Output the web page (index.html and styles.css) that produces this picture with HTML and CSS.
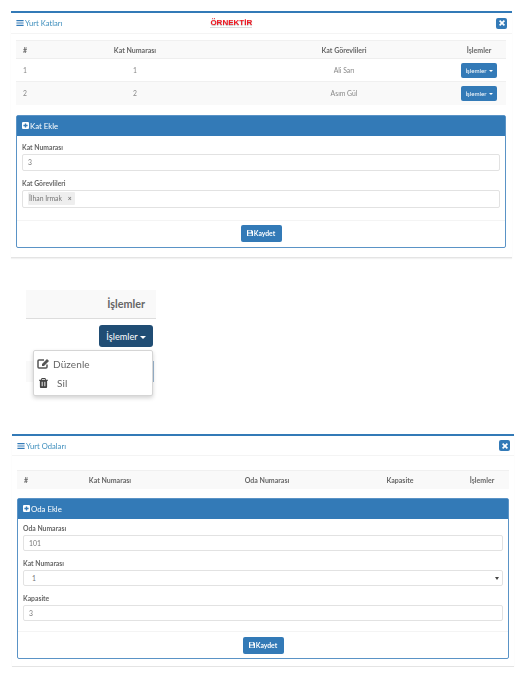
FILE: index.html
```html
<!DOCTYPE html>
<html lang="tr">
<head>
  <meta charset="UTF-8" />
  <title>Yurt Katları</title>
  <link rel="stylesheet" href="styles.css">
</head>
<body>
  <svg class="sprite" width="0" height="0">
    <symbol id="i-bars" viewBox="0 0 12 10"><path d="M0 0h12v2H0zM0 4h12v2H0zM0 8h12v2H0z"/></symbol>
    <symbol id="i-close" viewBox="0 0 10 10"><path d="M2 0l3 3 3-3 2 2-3 3 3 3-2 2-3-3-3 3-2-2 3-3-3-3z"/></symbol>
    <symbol id="i-plus" viewBox="0 0 10 10"><path fill-rule="evenodd" d="M1.5 0h7A1.5 1.5 0 0 1 10 1.500v7A1.500 1.500 0 0 1 8.500 10h-7A1.500 1.500 0 0 1 0 8.500v-7A1.500 1.500 0 0 1 1.500 0zM4 2v2H2v2h2v2h2V6h2V4H6V2z"/></symbol>
    <symbol id="i-save" viewBox="0 0 10 10"><path fill-rule="evenodd" d="M1 0h7l2 2v7a1 1 0 0 1-1 1H1a1 1 0 0 1-1-1V1a1 1 0 0 1 1-1zm1 1v3h5V1zm0 5v3h6V6z"/></symbol>
  </svg>

  <section class="box box-katlar">
    <header class="box-header">
      <svg class="ico-bars"><use href="#i-bars"/></svg>
      <span class="box-title">Yurt Katları</span>
      <span class="ornek">ÖRNEKTİR</span>
      <button class="btn-close"><svg><use href="#i-close"/></svg></button>
    </header>

    <table class="grid">
      <colgroup>
        <col class="k1"><col class="k2"><col class="k3"><col class="k4">
      </colgroup>
      <thead>
        <tr><th class="left">#</th><th>Kat Numarası</th><th>Kat Görevlileri</th><th>İşlemler</th></tr>
      </thead>
      <tbody>
        <tr>
          <td class="left">1</td><td>1</td><td>Ali Sarı</td>
          <td><button class="btn-mini">İşlemler<i class="caret"></i></button></td>
        </tr>
        <tr>
          <td class="left">2</td><td>2</td><td>Asım Gül</td>
          <td><button class="btn-mini">İşlemler<i class="caret"></i></button></td>
        </tr>
      </tbody>
    </table>

    <div class="panel">
      <div class="panel-heading"><svg class="ico-plus"><use href="#i-plus"/></svg>Kat Ekle</div>
      <div class="panel-body">
        <label>Kat Numarası</label>
        <input class="field" type="text" value="3">
        <label class="next">Kat Görevlileri</label>
        <div class="field tags"><span class="tag">İlhan Irmak <b>×</b></span></div>
      </div>
      <div class="panel-footer">
        <button class="btn-save"><svg><use href="#i-save"/></svg>Kaydet</button>
      </div>
    </div>
  </section>

  <div class="crop">
    <div class="crop-head">İşlemler</div>
    <div class="crop-row">
      <button class="btn-open">İşlemler<i class="caret"></i></button>
      <span class="crop-edge"></span>
      <ul class="menu">
        <li>
          <svg viewBox="0 0 13 11" width="13" height="11"><path fill="none" stroke="#555" stroke-width="1.500" d="M10 6.500V9a1 1 0 0 1-1 1H2a1 1 0 0 1-1-1V3a1 1 0 0 1 1-1h5"/><path fill="#555" d="M5 6l5-5 2 2-5 5H5z"/></svg>
          <span>Düzenle</span>
        </li>
        <li class="menu-sil">
          <svg viewBox="0 0 10 11" width="9" height="10"><path fill="#444" fill-rule="evenodd" d="M3 0h4l1 2h2v1H9v7a1 1 0 0 1-1 1H2a1 1 0 0 1-1-1V3H0V2h2zm.500 1L3 2h4l-.500-1zM3 4v5h1V4zm3 0v5h1V4z"/></svg>
          <span>Sil</span>
        </li>
      </ul>
    </div>
  </div>

  <section class="box box-odalar">
    <header class="box-header">
      <svg class="ico-bars"><use href="#i-bars"/></svg>
      <span class="box-title">Yurt Odaları</span>
      <button class="btn-close"><svg><use href="#i-close"/></svg></button>
    </header>

    <table class="grid">
      <colgroup>
        <col class="o1"><col class="o2"><col class="o3"><col class="o4"><col class="o5">
      </colgroup>
      <thead>
        <tr><th class="left">#</th><th>Kat Numarası</th><th>Oda Numarası</th><th>Kapasite</th><th>İşlemler</th></tr>
      </thead>
    </table>

    <div class="panel">
      <div class="panel-heading"><svg class="ico-plus"><use href="#i-plus"/></svg>Oda Ekle</div>
      <div class="panel-body">
        <label>Oda Numarası</label>
        <input class="field" type="text" value="101">
        <label class="next">Kat Numarası</label>
        <div class="field select">1<i class="select-arrow"></i></div>
        <label class="next">Kapasite</label>
        <input class="field" type="text" value="3">
      </div>
      <div class="panel-footer">
        <button class="btn-save"><svg><use href="#i-save"/></svg>Kaydet</button>
      </div>
    </div>
  </section>
</body>
</html>
```
FILE: styles.css
```css
* {
  box-sizing: border-box;
}

body {
  margin: 0;
  padding: 0;
  background: #fff;
  font-family: Lato, sans-serif;
  font-size: 6.800px;
  color: #777;
}

.sprite {
  position: absolute;
}

button {
  font-family: inherit;
  cursor: pointer;
}

/* outer boxes */
.box {
  background: #fff;
  border-top: 2px solid #337ab7;
  border-bottom: 1px solid #e4e4e4;
  box-shadow: 0 1px 1px rgba(0,0,0,0.05);
  filter: blur(0.3px);
}

.box-katlar {
  width: 501px;
  height: 247px;
  margin: 11px 0 0 11px;
}

.box-odalar {
  width: 502px;
  height: 233px;
  margin: 38px 0 0 12px;
}

.box-header {
  display: flex;
  align-items: center;
  height: 21px;
  padding: 0 5px;
  border-bottom: 1px solid #f4f4f4;
}

.box-odalar .box-header {
  height: 20px;
  padding-right: 4px;
}

.ico-bars {
  width: 8px;
  height: 6px;
  fill: #337ab7;
  margin-right: 1px;
}

.box-title {
  font-size: 7.600px;
  color: #3c8dbc;
}

.ornek {
  margin-left: 148px;
  font-family: "Liberation Sans", sans-serif;
  font-size: 8px;
  font-weight: bold;
  color: #f0141e;
  text-shadow: 0 1px 1px #bbb;
  border-bottom: 1px solid #ddd;
}

.btn-close {
  margin-left: auto;
  width: 11px;
  height: 11px;
  padding: 2.500px;
  border: none;
  border-radius: 2px;
  background: #337ab7;
  display: flex;
}

.btn-close svg {
  width: 6px;
  height: 6px;
  fill: #fff;
}

/* tables */
.grid {
  border-collapse: collapse;
  table-layout: fixed;
  margin: 6px 0 0 5px;
}

.box-katlar .grid {
  width: 490px;
}

.box-odalar .grid {
  width: 492px;
  margin-top: 14px;
}

.k1 { width: 18px; }
.k2 { width: 202px; }
.k3 { width: 216px; }
.k4 { width: 54px; }

.o1 { width: 14px; }
.o2 { width: 158px; }
.o3 { width: 156px; }
.o4 { width: 110px; }
.o5 { width: 54px; }

.grid th {
  height: 18px;
  padding: 0;
  background: #f9f9f9;
  font-size: 7px;
  font-weight: 700;
  color: #666;
  text-align: center;
}

.grid thead {
  border-top: 1px solid #f0f0f0;
  border-bottom: 1px solid #eee;
}

.box-odalar .grid thead {
  border-bottom: none;
}

.grid td {
  height: 23px;
  padding: 0;
  text-align: center;
  font-size: 6.800px;
  color: #888;
}

.grid tbody tr {
  border-bottom: 1px solid #f0f0f0;
}

.grid tbody tr:nth-child(even) {
  background: #f9f9f9;
  border-bottom: none;
}

.grid .left {
  text-align: left;
  padding-left: 7px;
}

.btn-mini {
  width: 36px;
  height: 15px;
  padding: 0;
  border: none;
  border-radius: 2px;
  background: #337ab7;
  color: #fff;
  font-size: 6.200px;
  vertical-align: middle;
}

.caret {
  display: inline-block;
  margin-left: 2px;
  vertical-align: middle;
  border-top: 2px solid #fff;
  border-left: 2px solid transparent;
  border-right: 2px solid transparent;
}

/* form panel */
.panel {
  margin: 10px 0 0 5px;
  border: 1px solid #5a93c6;
  border-radius: 2px;
  background: #fff;
}

.box-katlar .panel {
  width: 490px;
  height: 133px;
}

.box-odalar .panel {
  width: 492px;
  height: 161px;
  margin-top: 9px;
}

.panel-heading {
  display: flex;
  align-items: center;
  height: 20px;
  padding-left: 5px;
  background: #337ab7;
  color: #fff;
  font-size: 7.800px;
}

.ico-plus {
  width: 7px;
  height: 7px;
  fill: #fff;
  margin-right: 1px;
}

.panel-body {
  padding: 6px 5px 0;
  height: 85px;
  border-bottom: 1px solid #f4f4f4;
}

.box-odalar .panel-body {
  height: 113px;
  padding-top: 4px;
}

.panel-body label {
  display: block;
  height: 10px;
  line-height: 10px;
  margin-bottom: 2px;
  font-size: 6.800px;
  font-weight: 700;
  color: #666;
}

.panel-body .next {
  margin-top: 7px;
}

.field {
  display: block;
  width: 100%;
  height: 17px;
  padding: 0 5px;
  border: 1px solid #e2e2e2;
  border-radius: 2px;
  background: #fff;
  font-family: inherit;
  font-size: 6.800px;
  line-height: 15px;
  color: #777;
}

.box-odalar .field {
  height: 16px;
  line-height: 14px;
}

.tags {
  display: flex;
  align-items: center;
  padding-left: 5px;
  height: 18px;
}

.tag {
  padding: 0 3px 0 1px;
  background: #eee;
  border-radius: 1px;
  line-height: 13px;
  color: #777;
}

.tag b {
  margin-left: 4px;
}

.box-odalar .select {
  position: relative;
  padding-left: 8px;
}

.select-arrow {
  position: absolute;
  right: 3px;
  top: 6px;
  border-top: 3px solid #444;
  border-left: 2px solid transparent;
  border-right: 2px solid transparent;
}

.panel-footer {
  display: flex;
  justify-content: center;
  padding-top: 4px;
}

.box-odalar .panel-footer {
  padding-top: 5px;
}

.btn-save {
  display: flex;
  align-items: center;
  justify-content: center;
  width: 41px;
  height: 17px;
  padding: 0;
  border: none;
  border-radius: 2px;
  background: #337ab7;
  color: #fff;
  font-size: 6.800px;
  font-weight: 700;
}

.btn-save svg {
  width: 6px;
  height: 6px;
  fill: #fff;
  margin-right: 1px;
}

/* enlarged dropdown crop */
.crop {
  width: 130px;
  margin: 32px 0 0 26px;
  filter: blur(0.2px);
}

.crop-head {
  height: 29px;
  padding-right: 11px;
  background: #f9f9f9;
  border-bottom: 1px solid #ddd;
  text-align: right;
  font-size: 10.800px;
  font-weight: 700;
  line-height: 28px;
  color: #666;
}

.crop-row {
  position: relative;
  height: 77px;
  padding: 6px 0 0 73px;
}

.btn-open {
  display: block;
  width: 54px;
  height: 22px;
  padding: 0;
  border: none;
  border-radius: 3px;
  background: #204d74;
  color: #fff;
  font-size: 9.200px;
}

.btn-open .caret {
  border-top-width: 3px;
  border-left-width: 3px;
  border-right-width: 3px;
}

.crop-edge {
  position: absolute;
  left: 0;
  right: 2px;
  top: 42px;
  height: 21px;
  background: #f9f9f9;
  border-right: 2px solid #9db8d2;
}

.menu {
  position: absolute;
  left: 7px;
  top: 31px;
  width: 120px;
  height: 46px;
  margin: 0;
  padding: 3px 0 0;
  list-style: none;
  background: #fff;
  border: 1px solid #d5d5d5;
  border-radius: 2px;
  box-shadow: 0 2px 4px rgba(0,0,0,0.18);
  font-size: 10px;
  letter-spacing: 0.1px;
  color: #666;
}

.menu li {
  display: flex;
  align-items: center;
  height: 19px;
  padding-left: 3px;
}

.menu svg {
  width: 13px;
  margin-right: 3px;
}

.menu .menu-sil {
  padding-left: 5px;
}

.menu-sil svg {
  width: 9px;
  margin-right: 9px;
}
```
